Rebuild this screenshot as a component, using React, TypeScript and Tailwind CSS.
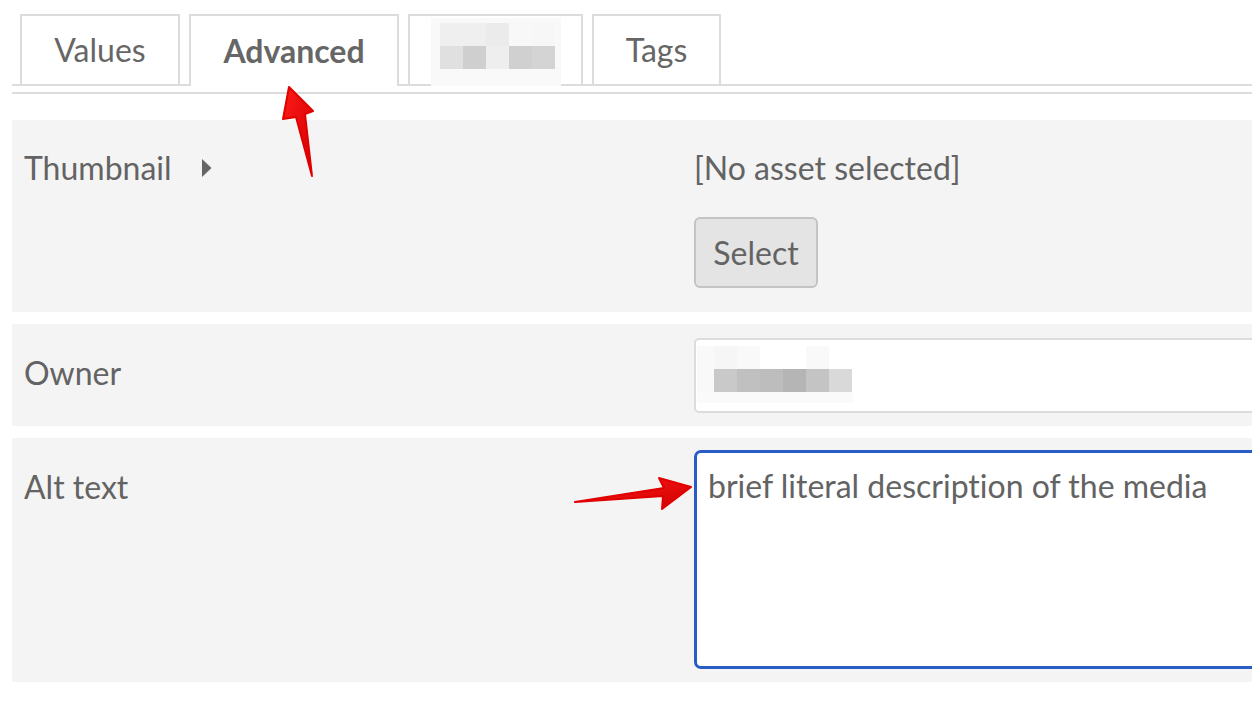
import React from 'react';

const tabBlur = [
  ['#f9f9f9', '#efefef', '#efefef', '#ebebeb', '#f8f8f8', '#f7f7f7'],
  ['#f9f9f9', '#e0e0e0', '#cfcfcf', '#eeeeee', '#d0d0d0', '#d4d4d4'],
];

const ownerBlur = [
  ['#f9f9f9', '#f6f6f6', '#f9f9f9', '#ffffff', '#ffffff', '#f9f9f9', '#ffffff'],
  ['#f8f8f8', '#c9c9c9', '#c0c0c0', '#bdbdbd', '#b5b5b5', '#c4c4c4', '#d9d9d9'],
];

function Tab({ label, active, width }: { label?: string; active?: boolean; width: string }) {
  return (
    <div
      className={`${width} ${active ? 'h-[72px] -mb-[2px] bg-white font-bold' : 'h-[70px]'} border-2 border-b-0 border-[#dcdcdc] flex items-center justify-center text-[32px] text-[#666]`}
    >
      {label}
    </div>
  );
}

export default function App() {
  return (
    <div
      className="relative w-[1252px] h-[714px] overflow-hidden bg-white text-[#636363] [font-variant-ligatures:none]"
      style={{ fontFamily: 'Lato, "Open Sans", sans-serif' }}
    >
      <div className="pt-[14px] pl-[12px]">
        {/* tabs */}
        <div className="flex items-end gap-[9px] pl-[8px] border-b-2 border-[#dcdcdc]">
          <Tab label="Values" width="w-[160px]" />
          <Tab label="Advanced" width="w-[210px]" active />
          <div className="w-[175px] h-[70px] border-2 border-b-0 border-[#dcdcdc] flex justify-center">
            <div className="mt-[2px] w-[130px] h-[68px] bg-[#f9f9f9] flex flex-col pt-[5px]">
              {tabBlur.map((row, i) => (
                <div key={i} className="flex h-[23px] pl-[9px]">
                  {row.slice(1).map((c, j) => (
                    <div key={j} className="w-[23px] h-[23px]" style={{ background: c }} />
                  ))}
                </div>
              ))}
            </div>
          </div>
          <Tab label="Tags" width="w-[129px]" />
        </div>

        <div className="mt-[6px] border-t-2 border-[#dcdcdc] pt-[26px] flex flex-col gap-[12px]">
          {/* Thumbnail */}
          <div className="h-[192px] bg-[#f4f4f4] grid grid-cols-[682px_1fr] overflow-hidden">
            <div className="pl-[12px] pt-[30px] flex items-start text-[32px] leading-[36px]">
              <span>Thumbnail</span>
              <svg className="ml-[29px] mt-[8px]" width="11" height="20" viewBox="0 0 11 20">
                <path d="M1 1 L10.5 10 L1 19 Z" fill="#666" />
              </svg>
            </div>
            <div className="pt-[30px] text-[32px] leading-[36px]">
              <div>[No asset selected]</div>
              <button className="mt-[31px] w-[124px] h-[71px] bg-[#e4e4e4] border-2 border-[#c4c4c4] rounded-[6px] text-[32px] text-[#636363]">
                Select
              </button>
            </div>
          </div>

          {/* Owner */}
          <div className="h-[102px] bg-[#f4f4f4] grid grid-cols-[682px_1fr] overflow-hidden">
            <div className="pl-[12px] pt-[31px] text-[32px] leading-[36px]">Owner</div>
            <div className="pt-[14px]">
              <div className="w-[620px] h-[75px] bg-white border-2 border-[#dcdcdc] rounded-[5px] pl-[1px] pt-[6px]">
                <div className="w-[156px] flex flex-col">
                  {ownerBlur.map((row, i) => (
                    <div key={i} className="flex h-[23px]">
                      <div className="w-[17px] h-[23px] bg-[#f9f9f9]" />
                      {row.slice(1).map((c, j) => (
                        <div key={j} className="w-[23px] h-[23px]" style={{ background: c }} />
                      ))}
                    </div>
                  ))}
                  <div className="h-[11px] bg-[#fafafa]" />
                </div>
              </div>
            </div>
          </div>

          {/* Alt text */}
          <div className="h-[244px] bg-[#f4f4f4] grid grid-cols-[682px_1fr] overflow-hidden">
            <div className="pl-[12px] pt-[31px] text-[32px] leading-[36px]">Alt text</div>
            <div className="pt-[12px]">
              <textarea
                readOnly
                defaultValue="brief literal description of the media"
                className="block w-[620px] h-[219px] resize-none bg-white border-[3px] border-[#2a5cc6] rounded-[7px] pl-[11px] pt-[15px] text-[32px] leading-[36px] text-[#636363] outline-none [font-variant-ligatures:none]"
              />
            </div>
          </div>
        </div>
      </div>

      {/* annotation arrows */}
      <svg className="absolute inset-0 pointer-events-none" width="1252" height="714" viewBox="0 0 1252 714">
        <defs>
          <linearGradient id="red" x1="0" y1="0" x2="1" y2="1">
            <stop offset="0" stopColor="#ff1a1a" />
            <stop offset="1" stopColor="#d00000" />
          </linearGradient>
        </defs>
        <path
          d="M312 176 L296 117 L283 119 L289 87 L313 111 L305 114 Z"
          fill="url(#red)"
          stroke="#e00000"
          strokeWidth="2"
          strokeLinejoin="round"
        />
        <path
          d="M575 502 L663 496 L662 509 L691 487 L659 478 L664 488 Z"
          fill="url(#red)"
          stroke="#e00000"
          strokeWidth="2"
          strokeLinejoin="round"
        />
      </svg>
    </div>
  );
}
